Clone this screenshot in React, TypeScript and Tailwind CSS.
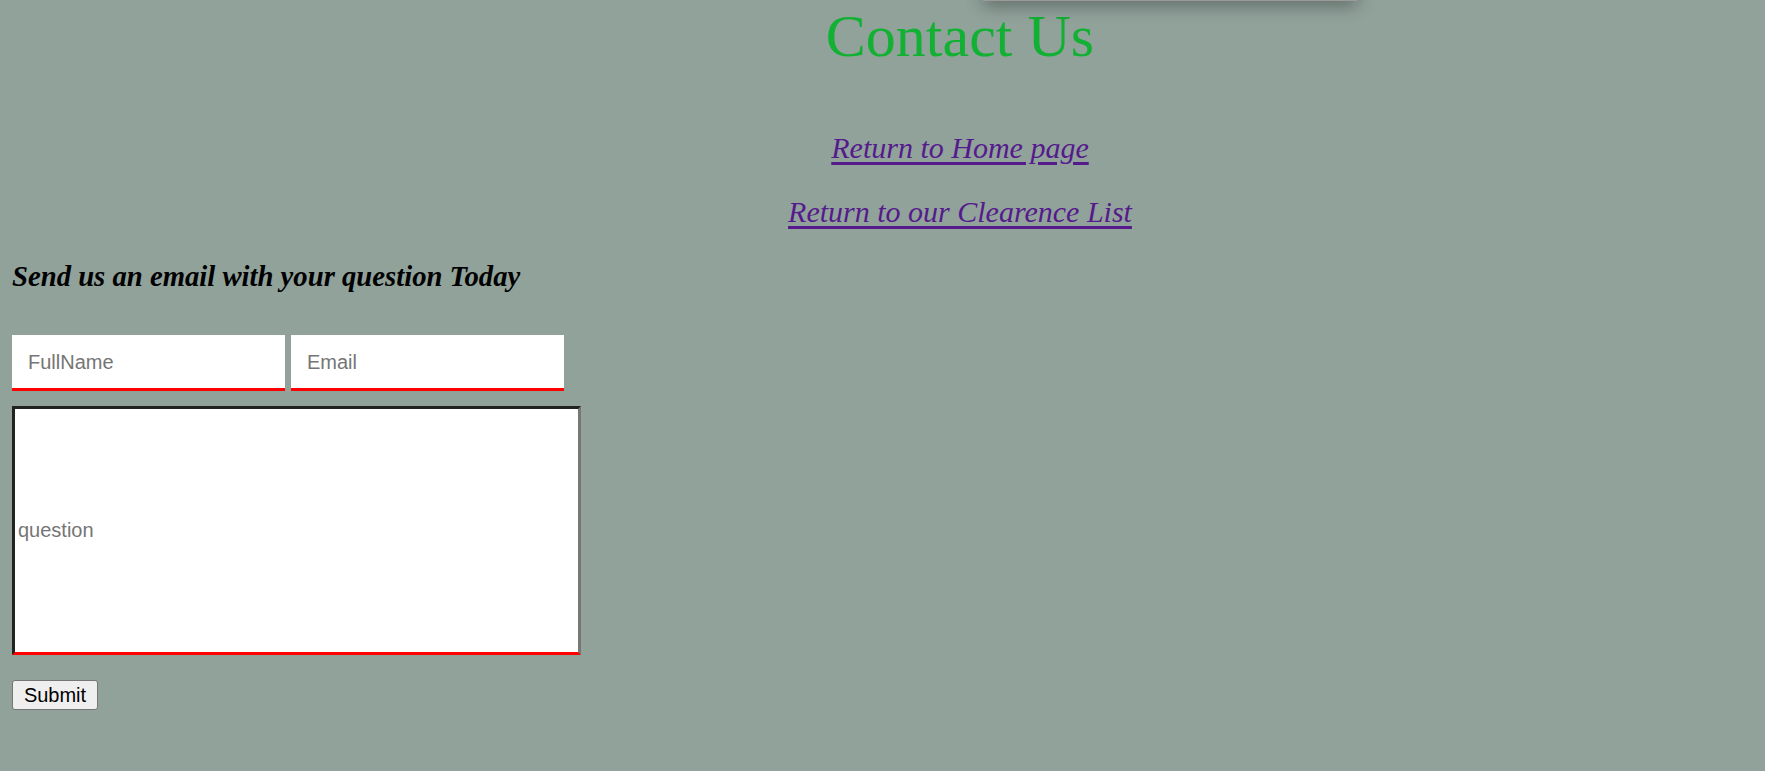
const App: React.FC = () => {
  return (
    <div className="relative min-h-screen w-full overflow-hidden bg-[#91a29b] px-[12px] font-['Liberation_Serif',serif]">
      {/* popup edge peeking in from the top */}
      <div className="absolute left-[983px] top-[-12px] h-[13px] w-[374px] rounded-b-[2px] border-b border-[#9a9a9a] bg-white shadow-[0_3px_18px_rgba(0,0,0,0.45)]" />

      <div className="w-[1896px] pt-[2px] text-center">
        <h1 className="text-[60px] leading-[69px] font-normal text-[#12b133]">Contact Us</h1>
        <p className="mt-[60px] text-[30px] leading-[34px] italic">
          <a href="#" className="text-[#551a8b] underline decoration-[3px] underline-offset-[4px]">
            Return to Home page
          </a>
        </p>
        <p className="mt-[30px] text-[30px] leading-[34px] italic">
          <a href="#" className="text-[#551a8b] underline decoration-[3px] underline-offset-[4px]">
            Return to our Clearence List
          </a>
        </p>
      </div>

      <h3 className="mt-[31px] text-[28.7px] leading-[32px] font-bold italic text-black">
        Send us an email with your question Today
      </h3>

      <form className="mt-[43px] font-['Liberation_Sans',Arial,sans-serif]">
        <div className="flex gap-[6px]">
          <input
            type="text"
            placeholder="FullName"
            className="h-[56px] w-[273px] border-b-[3px] border-[#ff0000] bg-white px-[16px] pt-[2px] text-[20px] text-black outline-none placeholder:text-[#757575]"
          />
          <input
            type="email"
            placeholder="Email"
            className="h-[56px] w-[273px] border-b-[3px] border-[#ff0000] bg-white px-[16px] pt-[2px] text-[20px] text-black outline-none placeholder:text-[#757575]"
          />
        </div>
        <input
          type="text"
          placeholder="question"
          className="mt-[15px] block h-[249px] w-[569px] border-[3px] border-t-[#222] border-l-[#222] border-r-[#777] border-b-[#ff0000] bg-white px-[3px] text-[20px] text-black outline-none placeholder:text-[#757575]"
        />
        <button
          type="submit"
          className="mt-[25px] block h-[30px] w-[86px] rounded-[3px] border-[1.5px] border-[#767676] bg-[#efefef] text-[20px] leading-none text-black"
        >
          Submit
        </button>
      </form>
    </div>
  );
};

export default App;
